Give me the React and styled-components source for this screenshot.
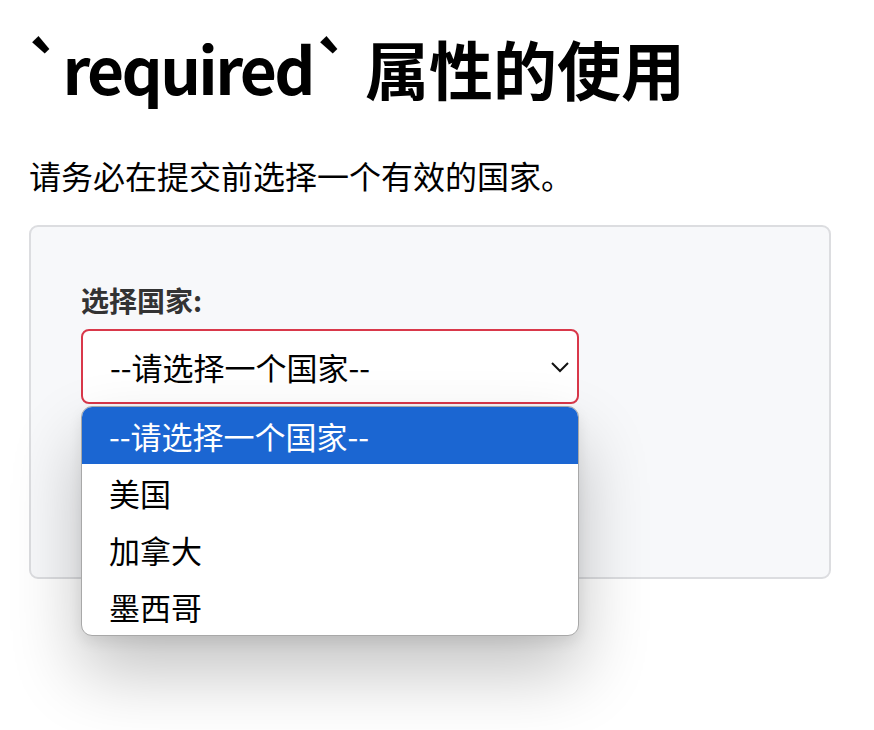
import React from 'react';
import styled, { createGlobalStyle } from 'styled-components';

const blue = "#1b66d2";

const GlobalStyle = createGlobalStyle`
  html, body {
    margin: 0;
    background: #fff;
    font-family: "Noto Sans CJK SC", "Noto Sans", sans-serif;
    color: #000;
  }
`;

const Page = styled.main`
  box-sizing: border-box;
  min-height: 730px;
  padding: 0 43px 0 29px;
  overflow: hidden;
`;

const Title = styled.h1`
  font-size: 64px;
  font-weight: 700;
  line-height: 76px;
  margin: 29px 0 0 -4px;
`;

const Code = styled.span`
  letter-spacing: -2.6px;
  margin-right: 0;
`;

const Intro = styled.p`
  font-size: 32px;
  line-height: 44px;
  margin: 48px 0 28px;
`;

const Panel = styled.form`
  background: #f7f8fa;
  border: 2px solid #dcdde0;
  border-radius: 9px;
  padding: 53px 50px 53px;
  display: flex;
  flex-direction: column;
  align-items: flex-start;
`;

const Label = styled.label`
  font-size: 28px;
  font-weight: 700;
  line-height: 40px;
  color: #333;
  margin-bottom: 9px;
`;

const SelectWrap = styled.div`
  position: relative;
  width: 498px;
  z-index: 2;
`;

const SelectBox = styled.div`
  box-sizing: border-box;
  height: 75px;
  border: 2px solid ${props => (props.invalid ? "#d9384a" : "#aaa")};
  border-radius: 8px;
  background: #fff;
  display: flex;
  align-items: center;
  justify-content: space-between;
  padding: 0 7px 0 27px;
  font-size: 31px;
`;

const Dropdown = styled.ul`
  position: absolute;
  top: 77px;
  left: 0;
  width: 100%;
  box-sizing: border-box;
  margin: 0;
  padding: 0;
  list-style: none;
  background: #fff;
  border: 1px solid #a8a8a8;
  border-radius: 11px;
  overflow: hidden;
  box-shadow: 0 36px 70px rgba(0, 0, 0, 0.24), 0 6px 14px rgba(0, 0, 0, 0.08);
`;

const Option = styled.li`
  height: 57px;
  display: flex;
  align-items: center;
  padding-left: 27px;
  font-size: 31px;
  background: ${props => (props.active ? blue : "transparent")};
  color: ${props => (props.active ? "#fff" : "#000")};
`;

const SubmitButton = styled.button`
  margin-top: 48px;
  height: 72px;
  width: 160px;
  border: none;
  border-radius: 8px;
  background: ${blue};
`;

const Chevron = () => (
  <svg width="20" height="12" viewBox="0 0 20 12">
    <path d="M2 2 L10 10 L18 2" fill="none" stroke="#111" strokeWidth="2" />
  </svg>
);

const countries = ["--请选择一个国家--", "美国", "加拿大", "墨西哥"];

const App = () => (
  <Page>
    <GlobalStyle />
    <Title><Code>`required`</Code> 属性的使用</Title>
    <Intro>请务必在提交前选择一个有效的国家。</Intro>
    <Panel onSubmit={e => e.preventDefault()}>
      <Label>选择国家:</Label>
      <SelectWrap>
        <SelectBox invalid>
          <span>{countries[0]}</span>
          <Chevron />
        </SelectBox>
        <Dropdown>
          {countries.map((c, i) => (
            <Option key={c} active={i === 0}>{c}</Option>
          ))}
        </Dropdown>
      </SelectWrap>
      <SubmitButton type="submit" aria-label="提交" />
    </Panel>
  </Page>
);

export default App;
